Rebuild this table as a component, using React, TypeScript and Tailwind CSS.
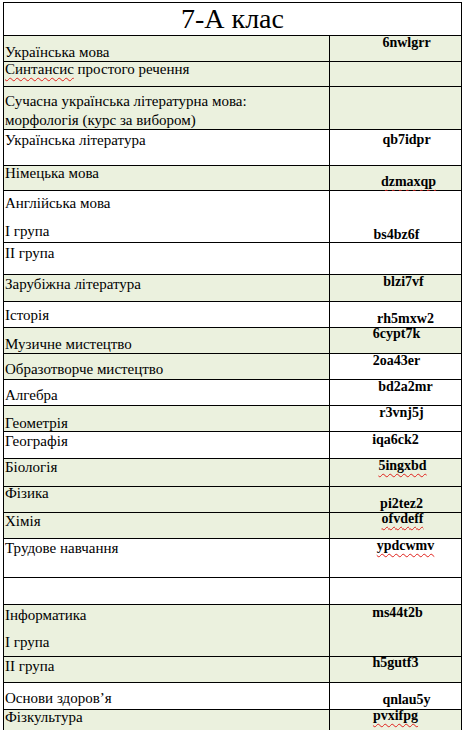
import React from 'react';

type Line = { text: string; mt?: string; wavy?: boolean };

interface Row {
  h: string;
  bgL: string;
  bgR: string;
  pt: string;
  lines: Line[];
  code?: string;
  codePt?: string;
  codePl?: string;
  codeWavy?: boolean;
}

const G = 'bg-[#ebf1de]';
const W = 'bg-white';

const ROWS: Row[] = [
  { h: 'h-[26px]', bgL: G, bgR: G, pt: 'pt-[10px]', lines: [{ text: 'Українська мова' }], code: '6nwlgrr', codePt: 'pt-[1px]', codePl: 'pl-[22px]' },
  { h: 'h-[25px]', bgL: G, bgR: G, pt: 'pt-[1px]', lines: [{ text: 'Синтансис', wavy: true }, { text: ' простого речення' }] },
  {
    h: 'h-[43px]', bgL: G, bgR: G, pt: 'pt-[8px]',
    lines: [{ text: 'Сучасна українська літературна мова:' }, { text: 'морфологія (курс за вибором)', mt: 'mt-[7px]' }],
  },
  { h: 'h-[36px]', bgL: W, bgR: W, pt: 'pt-[4px]', lines: [{ text: 'Українська література' }], code: 'qb7idpr', codePt: 'pt-[4px]', codePl: 'pl-[22px]' },
  { h: 'h-[25px]', bgL: G, bgR: G, pt: 'pt-[1px]', lines: [{ text: 'Німецька мова' }], code: 'dzmaxqp', codePt: 'pt-[10px]', codePl: 'pl-[26px]', codeWavy: true },
  {
    h: 'h-[52px]', bgL: W, bgR: W, pt: 'pt-[6px]',
    lines: [{ text: 'Англійська мова' }, { text: 'I група', mt: 'mt-[16px]' }],
    code: 'bs4bz6f', codePt: 'pt-[38px]', codePl: 'pl-[2px]',
  },
  { h: 'h-[32px]', bgL: W, bgR: W, pt: 'pt-[4px]', lines: [{ text: 'II група' }] },
  { h: 'h-[27px]', bgL: G, bgR: G, pt: 'pt-[3px]', lines: [{ text: 'Зарубіжна література' }], code: 'blzi7vf', codePt: 'pt-[1px]', codePl: 'pl-[16px]' },
  { h: 'h-[26px]', bgL: W, bgR: W, pt: 'pt-[7px]', lines: [{ text: 'Історія' }], code: 'rh5mxw2', codePt: 'pt-[11px]', codePl: 'pl-[20px]' },
  { h: 'h-[26px]', bgL: G, bgR: G, pt: 'pt-[10px]', lines: [{ text: 'Музичне мистецтво' }], code: '6cypt7k', codePt: 'pt-[0px]', codePl: 'pl-[2px]' },
  { h: 'h-[26px]', bgL: G, bgR: W, pt: 'pt-[9px]', lines: [{ text: 'Образотворче мистецтво' }], code: '2oa43er', codePt: 'pt-[1px]', codePl: 'pl-[2px]' },
  { h: 'h-[26px]', bgL: W, bgR: W, pt: 'pt-[9px]', lines: [{ text: 'Алгебра' }], code: 'bd2a2mr', codePt: 'pt-[1px]', codePl: 'pl-[20px]' },
  { h: 'h-[26px]', bgL: G, bgR: W, pt: 'pt-[11px]', lines: [{ text: 'Геометрія' }], code: 'r3vnj5j', codePt: 'pt-[1px]', codePl: 'pl-[12px]' },
  { h: 'h-[27px]', bgL: W, bgR: W, pt: 'pt-[3px]', lines: [{ text: 'Географія' }], code: 'iqa6ck2', codePt: 'pt-[2px]', codePl: 'pl-[0px]' },
  { h: 'h-[28px]', bgL: G, bgR: G, pt: 'pt-[2px]', lines: [{ text: 'Біологія' }], code: '5ingxbd', codePt: 'pt-[1px]', codePl: 'pl-[14px]', codeWavy: true },
  { h: 'h-[26px]', bgL: G, bgR: G, pt: 'pt-[0px]', lines: [{ text: 'Фізика' }], code: 'pi2tez2', codePt: 'pt-[11px]', codePl: 'pl-[12px]' },
  { h: 'h-[26px]', bgL: G, bgR: G, pt: 'pt-[2px]', lines: [{ text: 'Хімія' }], code: 'ofvdeff', codePt: 'pt-[0px]', codePl: 'pl-[14px]', codeWavy: true },
  { h: 'h-[39px]', bgL: W, bgR: W, pt: 'pt-[3px]', lines: [{ text: 'Трудове навчання' }], code: 'ypdcwmv', codePt: 'pt-[1px]', codePl: 'pl-[20px]', codeWavy: true },
  { h: 'h-[27px]', bgL: W, bgR: W, pt: 'pt-[0px]', lines: [] },
  {
    h: 'h-[52px]', bgL: G, bgR: G, pt: 'pt-[4px]',
    lines: [{ text: 'Інформатика' }, { text: 'I група', mt: 'mt-[15px]' }],
    code: 'ms44t2b', codePt: 'pt-[2px]', codePl: 'pl-[4px]',
  },
  { h: 'h-[26px]', bgL: G, bgR: G, pt: 'pt-[3px]', lines: [{ text: 'II група' }], code: 'h5gutf3', codePt: 'pt-[0px]', codePl: 'pl-[0px]' },
  { h: 'h-[27px]', bgL: W, bgR: W, pt: 'pt-[9px]', lines: [{ text: 'Основи здоров’я' }], code: 'qnlau5y', codePt: 'pt-[11px]', codePl: 'pl-[22px]' },
  { h: 'h-[30px]', bgL: G, bgR: G, pt: 'pt-[1px]', lines: [{ text: 'Фізкультура' }], code: 'pvxifpg', codePt: 'pt-[0px]', codePl: 'pl-[0px]', codeWavy: true },
];

const wavy = 'underline decoration-wavy decoration-[#e0201b] decoration-1 underline-offset-[3px]';

export default function App() {
  return (
    <div className="min-h-[730px] bg-white text-black font-['Liberation_Serif','Times_New_Roman',serif]">
      <div className="ml-[3px] pt-[2px] w-[459px]">
        <div className="border-t border-l border-r border-black">
          <div className="h-[33px] border-b border-black text-center text-[28px] leading-[32px]">7-А клас</div>

          {ROWS.map((row, i) => (
            <div key={i} className={`flex ${row.h} border-b border-black`}>
              <div className={`w-[326px] shrink-0 border-r border-black pl-[1px] ${row.bgL} ${row.pt} text-[15px] leading-[12px]`}>
                {row.lines.length > 0 && row.lines[0].wavy ? (
                  <div className="whitespace-pre">
                    <span className={wavy}>{row.lines[0].text}</span>
                    {row.lines.slice(1).map((l) => l.text).join('')}
                  </div>
                ) : (
                  row.lines.map((l, j) => (
                    <div key={j} className={`whitespace-pre ${l.mt ?? ''}`}>
                      {l.text}
                    </div>
                  ))
                )}
              </div>
              <div className={`flex-1 text-center font-bold text-[14px] leading-[12px] ${row.bgR} ${row.codePt ?? ''} ${row.codePl ?? ''}`}>
                {row.code && <span className={row.codeWavy ? wavy : ''}>{row.code}</span>}
              </div>
            </div>
          ))}
        </div>
      </div>
    </div>
  );
}
